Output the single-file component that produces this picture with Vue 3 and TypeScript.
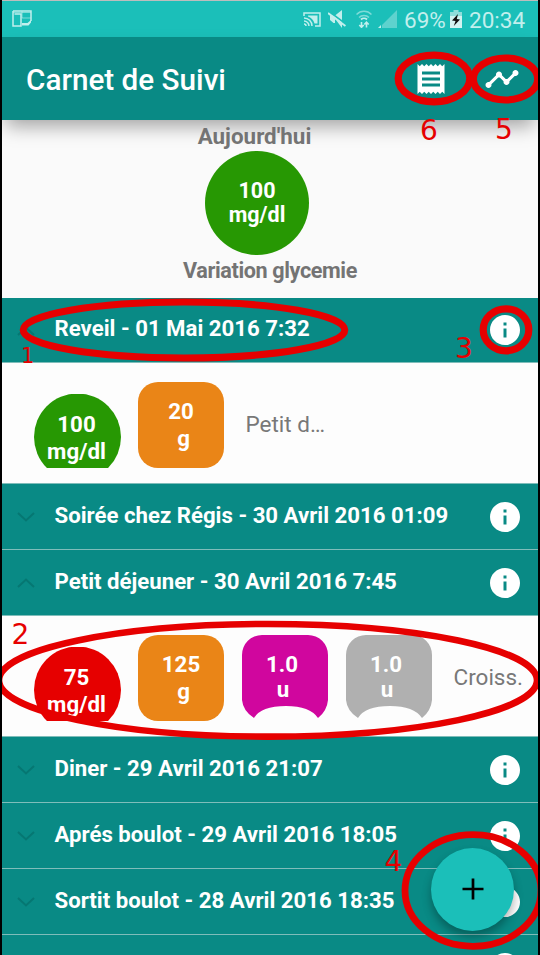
<script setup lang="ts">
type Shape = 'glucose' | 'meal' | 'insulin'

interface Chip {
  shape: Shape
  tone: string
  value: string
  unit: string
}

interface Entry {
  title: string
  open: boolean
  chips?: Chip[]
  note?: string
}

interface Ring {
  cx: number
  cy: number
  rx: number
  ry: number
  width: number
}

interface Mark {
  label: string
  x: number
  y: number
  small?: boolean
}

const entries: Entry[] = [
  {
    title: 'Reveil - 01 Mai 2016 7:32',
    open: true,
    chips: [
      { shape: 'glucose', tone: 'green', value: '100', unit: 'mg/dl' },
      { shape: 'meal', tone: 'orange', value: '20', unit: 'g' },
    ],
    note: 'Petit d…',
  },
  { title: 'Soirée chez Régis - 30 Avril 2016 01:09', open: false },
  {
    title: 'Petit déjeuner - 30 Avril 2016 7:45',
    open: true,
    chips: [
      { shape: 'glucose', tone: 'red', value: '75', unit: 'mg/dl' },
      { shape: 'meal', tone: 'orange', value: '125', unit: 'g' },
      { shape: 'insulin', tone: 'magenta', value: '1.0', unit: 'u' },
      { shape: 'insulin', tone: 'gray', value: '1.0', unit: 'u' },
    ],
    note: 'Croiss.',
  },
  { title: 'Diner - 29 Avril 2016 21:07', open: false },
  { title: 'Aprés boulot - 29 Avril 2016 18:05', open: false },
  { title: 'Sortit boulot - 28 Avril 2016 18:35', open: false },
  { title: '', open: false },
]

const rings: Ring[] = [
  { cx: 184, cy: 330, rx: 160.8, ry: 28, width: 7 },
  { cx: 268, cy: 680.3, rx: 269, ry: 56.3, width: 6.6 },
  { cx: 506, cy: 329.8, rx: 22.8, ry: 21, width: 7.2 },
  { cx: 473, cy: 890.5, rx: 68, ry: 55.8, width: 6.8 },
  { cx: 505.5, cy: 79, rx: 32.2, ry: 21, width: 7.2 },
  { cx: 434, cy: 78.5, rx: 35.8, ry: 23.3, width: 7.2 },
]

const marks: Mark[] = [
  { label: '1', x: 21, y: 363, small: true },
  { label: '2', x: 11.5, y: 643.5 },
  { label: '3', x: 455, y: 357.5 },
  { label: '4', x: 384.5, y: 871 },
  { label: '5', x: 495, y: 139 },
  { label: '6', x: 420, y: 140 },
]
</script>

<template>
  <div class="screen">
    <header class="status">
      <svg class="window-icon" viewBox="0 0 20 18" width="20" height="18">
        <path d="M1 1h18v10M1 1v15h8V4H2.500" fill="none" stroke="currentColor" stroke-width="1.500" />
        <path d="M10 8h9M10 1v7M1 2.500h18" fill="none" stroke="currentColor" stroke-width="1" opacity=".6" />
        <path d="M19 10l-3.500 3H10v2.500h6.500l2.500-3z" fill="currentColor" />
      </svg>
      <div class="status-right">
        <svg class="cast" viewBox="0 0 18 15" width="18" height="15">
          <path d="M1 4V1h16v13h-5" fill="none" stroke="currentColor" stroke-width="1.500" />
          <path d="M5 3.500h9.500v8h-3C10.500 8 8 5.500 5 4.500z" fill="currentColor" />
          <path d="M1 6a8 8 0 0 1 8 8M1 9a5 5 0 0 1 5 5M1 12a2 2 0 0 1 2 2" fill="none" stroke="currentColor" stroke-width="1.500" />
        </svg>
        <svg class="mute" viewBox="0 0 18 18" width="18" height="18">
          <path d="M14 0v14L7 8.500V5.500zM2 5.500h5V13H5.500L2 10zM8 10l6 3.500V18z" fill="currentColor" />
          <path d="M1 1.500L18 14" stroke="#1bbfb9" stroke-width="1.600" />
          <path d="M0 3l17.500 13" stroke="currentColor" stroke-width="2" />
        </svg>
        <svg class="wifi" viewBox="0 0 16 18" width="16" height="18">
          <path d="M0.500 4.500a10.500 10.500 0 0 1 15 0M3 7.500a7 7 0 0 1 10 0" fill="none" stroke="currentColor" stroke-width="1.500" opacity=".6" />
          <path d="M5 9.500a4.300 4.300 0 0 1 6 0" fill="none" stroke="currentColor" stroke-width="1.800" />
          <path d="M5.500 12v5M3.300 15l2.200 2.300L7.700 15M10.500 17.500v-5M8.300 14.500l2.200-2.300 2.200 2.300" fill="none" stroke="currentColor" stroke-width="1.600" />
        </svg>
        <svg class="signal" viewBox="0 0 19 18" width="19" height="18">
          <path d="M19 0v18H4v-3z" fill="currentColor" opacity=".4" />
          <path d="M0 18l3-3v3z" fill="currentColor" />
        </svg>
        <span class="percent">69%</span>
        <svg class="battery" viewBox="0 0 12 18" width="12" height="18">
          <path d="M3.500 0h5v2H12v5H0V2h3.500z" fill="#8fdedb" />
          <path d="M0 6h12v12H0z" fill="#d3f3f1" />
          <path d="M8 4L2 10.500l3.500.5-1.700 5L10 9.500 6.800 9z" fill="#111" />
        </svg>
        <span class="clock">20:34</span>
      </div>
    </header>

    <nav class="app-bar">
      <h1>Carnet de Suivi</h1>
      <div class="actions">
        <svg viewBox="0 0 24 24" width="36" height="36">
          <path
            fill="#fff"
            d="M18 17H6v-2h12v2zm0-4H6v-2h12v2zm0-4H6V7h12v2zM3 22l1.500-1.500L6 22l1.500-1.500L9 22l1.500-1.500L12 22l1.500-1.500L15 22l1.500-1.500L18 22l1.500-1.500L21 22V2l-1.500 1.500L18 2l-1.500 1.500L15 2l-1.500 1.500L12 2l-1.500 1.500L9 2 7.500 3.500 6 2 4.500 3.500 3 2v20z"
          />
        </svg>
        <svg viewBox="0 0 24 24" width="36" height="36">
          <path
            fill="#fff"
            d="M23 8c0 1.100-.9 2-2 2-.18 0-.35-.02-.51-.07l-3.560 3.550c.05.16.07.34.07.52 0 1.100-.9 2-2 2s-2-.9-2-2c0-.18.02-.36.07-.52l-2.550-2.550c-.16.05-.34.07-.52.07s-.36-.02-.52-.07l-4.550 4.560c.05.16.07.33.07.51 0 1.100-.9 2-2 2s-2-.9-2-2 .9-2 2-2c.18 0 .35.02.51.07l4.560-4.550C8.020 9.360 8 9.180 8 9c0-1.100.9-2 2-2s2 .9 2 2c0 .18-.02.36-.07.52l2.550 2.550c.16-.05.34-.07.52-.07s.36.02.52.07l3.550-3.560C19.020 8.350 19 8.180 19 8c0-1.100.9-2 2-2s2 .9 2 2z"
          />
        </svg>
      </div>
    </nav>

    <section class="summary">
      <p class="today">Aujourd'hui</p>
      <div class="average">
        <span>100</span>
        <span class="average-unit">mg/dl</span>
      </div>
      <p class="variation">Variation glycemie</p>
    </section>

    <main class="list">
      <template v-for="(entry, i) in entries" :key="i">
        <div class="row">
          <svg class="chevron" viewBox="0 0 18 10" width="18" height="10">
            <path :d="entry.open ? 'M1 9l8-7.500L17 9' : 'M1 1l8 7.500L17 1'" fill="none" stroke="#067772" stroke-width="2" />
          </svg>
          <span class="title">{{ entry.title }}</span>
          <svg class="info" viewBox="0 0 24 24" width="36" height="36">
            <path
              fill="#fff"
              d="M12 2C6.480 2 2 6.480 2 12s4.480 10 10 10 10-4.480 10-10S17.520 2 12 2zm1 15h-2v-6h2v6zm0-8h-2V7h2v2z"
            />
          </svg>
        </div>
        <div v-if="entry.open" class="detail">
          <div v-for="(chip, j) in entry.chips" :key="j" class="chip" :class="[chip.shape, chip.tone]">
            <svg v-if="chip.shape === 'insulin'" class="notch" viewBox="0 0 86 83" width="86" height="83">
              <path d="M20 0H66A20 20 0 0 1 86 20V65Q85 76 76 83Q68 71 44 71Q19 71 12 83Q1 76 0 65V20A20 20 0 0 1 20 0Z" />
            </svg>
            <span class="value">{{ chip.value }}</span>
            <span class="unit">{{ chip.unit }}</span>
          </div>
          <span class="note">{{ entry.note }}</span>
        </div>
      </template>
    </main>

    <button class="fab" aria-label="Ajouter">
      <svg viewBox="0 0 22 22" width="22" height="22">
        <path d="M11 0.500v21M0.500 11h21" stroke="#000" stroke-width="2.700" />
      </svg>
    </button>

    <svg class="annotations" viewBox="0 0 540 955" width="540" height="955">
      <ellipse
        v-for="(r, i) in rings"
        :key="'r' + i"
        :cx="r.cx"
        :cy="r.cy"
        :rx="r.rx"
        :ry="r.ry"
        :stroke-width="r.width"
      />
      <text v-for="m in marks" :key="m.label" :x="m.x" :y="m.y" :class="{ small: m.small }">{{ m.label }}</text>
    </svg>
  </div>
</template>

<style>
body {
  background: #000;
  overflow: hidden;
}
</style>

<style scoped>
.screen {
  position: relative;
  box-sizing: border-box;
  width: 540px;
  height: 955px;
  overflow: hidden;
  display: flex;
  flex-direction: column;
  border: solid #000;
  border-width: 0 2px;
  background: #fafafa;
  font-family: Roboto, 'Liberation Sans', sans-serif;
}
svg {
  display: block;
  flex: none;
}
.status {
  flex: none;
  box-sizing: border-box;
  height: 37px;
  border-top: 1px solid #bdbdbd;
  background: #1bbfb9;
  color: #c2efed;
  display: flex;
  justify-content: space-between;
  align-items: center;
  padding: 0 12px 0 10px;
}
.status-right {
  display: flex;
  align-items: center;
  font-size: 22.5px;
  line-height: 36px;
}
.cast {
  margin-right: 7px;
}
.mute {
  margin-right: 10px;
}
.wifi {
  margin-right: 6px;
}
.signal {
  margin-right: 7px;
}
.percent {
  width: 46px;
  padding-top: 1px;
}
.clock {
  width: 57px;
  margin-left: 7px;
  padding-top: 1px;
}
.app-bar {
  flex: none;
  position: relative;
  z-index: 1;
  height: 83px;
  background: #098a85;
  box-shadow: 0 10px 18px -4px rgba(0, 0, 0, 0.36);
  display: flex;
  align-items: center;
  justify-content: space-between;
  padding: 0 18px 0 24px;
}
h1 {
  margin: 0;
  padding-top: 2px;
  color: #fff;
  font-size: 29.7px;
  font-weight: 500;
  line-height: 36px;
  white-space: nowrap;
}
.actions {
  display: flex;
  gap: 35px;
}
.summary {
  flex: none;
  height: 178px;
  box-sizing: border-box;
  padding: 0 26px 0 0;
  display: flex;
  flex-direction: column;
  align-items: center;
  color: #747474;
  font-size: 22.4px;
  font-weight: 700;
  background: #fafafa;
}
.summary p {
  margin: 0;
  line-height: 26px;
  white-space: nowrap;
}
.today {
  position: relative;
  z-index: 2;
  padding: 3px 5px 1.5px 0;
}
.average {
  box-sizing: border-box;
  flex: none;
  width: 104px;
  height: 104px;
  padding-top: 1px;
  border-radius: 50%;
  background: #279803;
  color: #fff;
  font-size: 21.5px;
  display: flex;
  flex-direction: column;
  align-items: center;
  justify-content: center;
  line-height: 24.5px;
}
.summary .variation {
  padding-left: 26px;
  padding-top: 3px;
  font-size: 21.6px;
  letter-spacing: -0.38px;
}
.list {
  flex: none;
}
.row {
  box-sizing: border-box;
  height: 66px;
  border-bottom: 1px solid #7fbdba;
  background: #098a85;
  display: flex;
  align-items: center;
  padding: 0 15px;
}
.row:first-child {
  height: 65px;
}
.chevron {
  margin: 1px 19.5px 0 0;
}
.title {
  flex: 1;
  padding-bottom: 4px;
  color: #fff;
  font-size: 22.2px;
  font-weight: 700;
  line-height: 26px;
  white-space: nowrap;
}
.detail {
  box-sizing: border-box;
  height: 121px;
  border-bottom: 1px solid #7fbdba;
  background: #fdfdfd;
  display: flex;
  align-items: flex-start;
  padding: 18.5px 0 0 32px;
}
.chip {
  position: relative;
  box-sizing: border-box;
  flex: none;
  width: 86px;
  height: 86px;
  margin-right: 18px;
  display: flex;
  flex-direction: column;
  align-items: center;
  color: #fff;
  font-size: 22.3px;
  font-weight: 700;
  line-height: 27px;
  padding-top: 16px;
}
.glucose {
  width: 87px;
  height: 74px;
  margin: 12px 17px 0 0;
  padding: 17px 2px 0 0;
  clip-path: circle(43.5px at 43.5px 43.5px);
}
.meal {
  border-radius: 20px;
}
.meal .unit {
  padding-left: 5px;
}
.insulin {
  padding: 17px 6px 0 0;
  line-height: 25px;
}
.insulin .unit {
  padding-left: 2px;
}
.notch {
  position: absolute;
  left: 0;
  top: 0;
}
.value,
.unit {
  position: relative;
}
.green {
  background: #279803;
}
.red {
  background: #e60000;
}
.orange {
  background: #ea8517;
}
.magenta .notch {
  fill: #d0069e;
}
.gray .notch {
  fill: #b0b0b0;
}
.note {
  margin: 29px 0 0 3.5px;
  color: #787878;
  font-size: 22.5px;
  line-height: 27px;
  white-space: nowrap;
}
.fab {
  position: absolute;
  left: 429px;
  top: 847.5px;
  width: 83px;
  height: 83px;
  padding: 0;
  border: 0;
  border-radius: 50%;
  background: #1bbfb9;
  box-shadow: 0 6px 10px rgba(0, 0, 0, 0.3);
  display: flex;
  align-items: center;
  justify-content: center;
}
.annotations {
  position: absolute;
  left: -2px;
  top: 0;
  z-index: 3;
}
.annotations ellipse {
  fill: none;
  stroke: #e60000;
}
.annotations text {
  fill: #e60000;
  font: 28px 'DejaVu Sans', sans-serif;
}
.annotations text.small {
  font-size: 21px;
}
</style>
